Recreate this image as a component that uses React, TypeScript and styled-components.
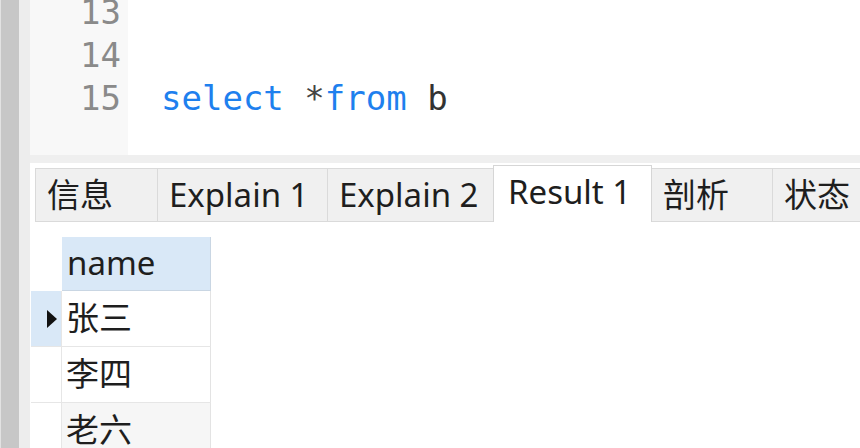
import React from "react";
import styled, { createGlobalStyle } from "styled-components";

const GlobalStyle = createGlobalStyle`
  html, body {
    margin: 0;
    padding: 0;
    background: #ffffff;
    overflow: hidden;
  }
  * { box-sizing: border-box; }
`;

const Window = styled.div`
  display: flex;
  width: 860px;
  height: 448px;
  overflow: hidden;
  background: #ffffff;
`;

const OuterRail = styled.div`
  width: 19px;
  flex: none;
  background: #c7c7c7;
  border-left: 1px solid #e2e2e2;
`;

const InnerRail = styled.div`
  width: 11px;
  flex: none;
  background: #ededed;
`;

const Main = styled.div`
  flex: 1;
  display: flex;
  flex-direction: column;
  min-width: 0;
`;

const Editor = styled.div`
  height: 155px;
  flex: none;
  display: flex;
  overflow: hidden;
  font-family: "DejaVu Sans Mono", monospace;
  font-size: 34px;
  line-height: 43px;
`;

const Gutter = styled.div`
  width: 98px;
  flex: none;
  background: #f8f8f8;
  padding-right: 7px;
  text-align: right;
  color: #8a8a8a;
`;

const Lines = styled.div`
  margin-top: -9px;
`;

const CodeArea = styled.div`
  flex: 1;
  background: #ffffff;
  padding-left: 33px;
  white-space: pre;
  color: #333333;
`;

const Line = styled.div`
  height: 43px;
`;

const Token = styled.span<{ $kind: "kw" | "op" | "id" }>`
  color: ${(p) => (p.$kind === "kw" ? "#1e80ee" : p.$kind === "op" ? "#444444" : "#333333")};
`;

const Separator = styled.div`
  height: 8px;
  flex: none;
  background: #efefef;
`;

const ResultPanel = styled.div`
  flex: 1;
  background: #ffffff;
  font-family: "Noto Sans", "Noto Sans CJK SC", sans-serif;
  font-size: 33px;
  color: #1e1e1e;
  overflow: hidden;
`;

const TabBar = styled.div`
  height: 59px;
  display: flex;
  align-items: flex-end;
  padding-left: 5px;
`;

const Tab = styled.div<{ $active?: boolean; $w: number }>`
  flex: none;
  width: ${(p) => p.$w}px;
  height: ${(p) => (p.$active ? 57 : 54)}px;
  margin-right: -1px;
  border: 1px solid ${(p) => (p.$active ? "#d6d6d6" : "#dadada")};
  border-bottom: ${(p) => (p.$active ? "none" : "1px solid #dadada")};
  background: ${(p) => (p.$active ? "#ffffff" : "#f0f0f0")};
  padding-left: ${(p) => (p.$active ? 14 : 11)}px;
  line-height: 52px;
  white-space: nowrap;
  position: relative;
  z-index: ${(p) => (p.$active ? 1 : 0)};
`;

const Grid = styled.div`
  margin-top: 15px;
  margin-left: 1px;
  display: grid;
  grid-template-columns: 31px 149px;
  grid-auto-rows: 56px;
  grid-template-rows: 54px;
`;

const Indicator = styled.div<{ $current?: boolean; $header?: boolean }>`
  background: ${(p) => (p.$current ? "#d9e8f7" : "#ffffff")};
  border-bottom: ${(p) => (p.$header ? "none" : "1px solid #e6e6e6")};
  border-right: 1px solid ${(p) => (p.$header ? "transparent" : "#e6e6e6")};
  display: flex;
  align-items: center;
  justify-content: flex-end;
  padding-right: 4px;
`;

const Arrow = styled.span`
  width: 0;
  height: 0;
  border-top: 9px solid transparent;
  border-bottom: 9px solid transparent;
  border-left: 10px solid #111111;
`;

const HeaderCell = styled.div`
  background: #d9e8f7;
  border-right: 1px solid #c9d6e3;
  border-bottom: 1px solid #c9d6e3;
  padding-left: 5px;
  line-height: 51px;
`;

const Cell = styled.div<{ $alt?: boolean }>`
  background: ${(p) => (p.$alt ? "#f6f6f6" : "#ffffff")};
  border-right: 1px solid #e3e3e3;
  border-bottom: 1px solid #e6e6e6;
  padding-left: 4px;
  line-height: 54px;
`;

const tabs = [
  { label: "信息", w: 123 },
  { label: "Explain 1", w: 171 },
  { label: "Explain 2", w: 167 },
  { label: "Result 1", w: 159, active: true },
  { label: "剖析", w: 122 },
  { label: "状态", w: 120 },
];

const rows = ["张三", "李四", "老六"];

export default function App() {
  return (
    <>
      <GlobalStyle />
      <Window>
        <OuterRail />
        <InnerRail />
        <Main>
          <Editor>
            <Gutter>
              <Lines>
                <Line>13</Line>
                <Line>14</Line>
                <Line>15</Line>
              </Lines>
            </Gutter>
            <CodeArea>
              <Lines>
                <Line />
                <Line />
                <Line>
                  <Token $kind="kw">select</Token> <Token $kind="op">*</Token>
                  <Token $kind="kw">from</Token> <Token $kind="id">b</Token>
                </Line>
              </Lines>
            </CodeArea>
          </Editor>
          <Separator />
          <ResultPanel>
            <TabBar>
              {tabs.map((t) => (
                <Tab key={t.label} $w={t.w} $active={t.active}>
                  {t.label}
                </Tab>
              ))}
            </TabBar>
            <Grid>
              <Indicator $header />
              <HeaderCell>name</HeaderCell>
              {rows.map((r, i) => (
                <React.Fragment key={r}>
                  <Indicator $current={i === 0}>{i === 0 && <Arrow />}</Indicator>
                  <Cell $alt={i === 2}>{r}</Cell>
                </React.Fragment>
              ))}
            </Grid>
          </ResultPanel>
        </Main>
      </Window>
    </>
  );
}
